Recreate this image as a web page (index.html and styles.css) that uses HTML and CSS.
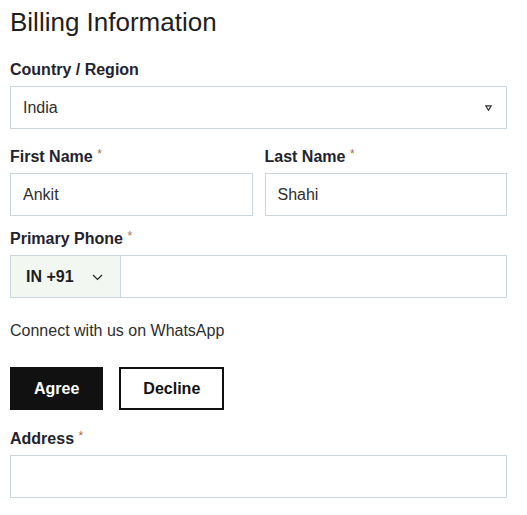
FILE: index.html
```html
<!DOCTYPE html>
<html lang="en">
<head>
<meta charset="utf-8">
<title>Billing Information</title>
<link rel="stylesheet" href="styles.css">
</head>
<body>
<form class="billing">
  <h1 class="title">Billing Information</h1>

  <div class="field field-country">
    <label class="label">Country / Region</label>
    <div class="select">
      <span class="select-value">India</span>
      <svg class="select-arrow" width="7" height="6" viewBox="0 0 7 6"><polygon points="0.8,0.8 6.2,0.8 3.5,5.2" fill="none" stroke="#333" stroke-width="1.2"/></svg>
    </div>
  </div>

  <div class="row-names">
    <div class="field">
      <label class="label">First Name <span class="req">*</span></label>
      <input class="input" type="text" value="Ankit">
    </div>
    <div class="field">
      <label class="label">Last Name <span class="req">*</span></label>
      <input class="input" type="text" value="Shahi">
    </div>
  </div>

  <div class="field field-phone">
    <label class="label">Primary Phone <span class="req">*</span></label>
    <div class="phone">
      <div class="phone-prefix">
        <span class="phone-code">IN +91</span>
        <svg class="chevron" width="11" height="7" viewBox="0 0 11 7"><polyline points="1,1 5.5,5.5 10,1" fill="none" stroke="#222" stroke-width="1.2"/></svg>
      </div>
      <input class="phone-input" type="text" value="">
    </div>
  </div>

  <p class="whatsapp">Connect with us on WhatsApp</p>

  <div class="buttons">
    <button type="button" class="btn btn-agree">Agree</button>
    <button type="button" class="btn btn-decline">Decline</button>
  </div>

  <div class="field field-address">
    <label class="label">Address <span class="req">*</span></label>
    <input class="input" type="text" value="">
  </div>
</form>
</body>
</html>
```

FILE: styles.css
```css
* {
  box-sizing: border-box;
}

body {
  margin: 0;
  padding: 7px 0 0 10px;
  background: #ffffff;
  font-family: "Liberation Sans", Arial, sans-serif;
  color: #222222;
}

.billing {
  width: 497px;
}

.title {
  margin: 0;
  font-size: 26px;
  line-height: 30px;
  font-weight: normal;
  color: #1e1e1e;
}

.field {
  display: flex;
  flex-direction: column;
}

.label {
  display: block;
  font-size: 16px;
  line-height: 20px;
  font-weight: bold;
  color: #23232f;
  margin-bottom: 6px;
}

.req {
  font-size: 12px;
  font-weight: normal;
  color: #a8703f;
  vertical-align: top;
  line-height: 15px;
}

.field-country {
  margin-top: 23px;
}

.select {
  height: 43px;
  border: 1px solid #cbd7de;
  display: flex;
  align-items: center;
  justify-content: space-between;
  padding: 0 14px 0 12px;
}

.select-value {
  font-size: 16px;
  color: #2e2e2e;
  margin-top: 1px;
}

.select-arrow {
  display: block;
}

.row-names {
  margin-top: 18px;
  display: grid;
  grid-template-columns: 1fr 1fr;
  gap: 12px;
}

.input {
  height: 43px;
  width: 100%;
  border: 1px solid #cbd7de;
  border-radius: 0;
  padding: 0 12px;
  font-family: "Liberation Sans", Arial, sans-serif;
  font-size: 16px;
  color: #2e2e2e;
  background: #ffffff;
  outline: none;
}

.field-phone {
  margin-top: 13px;
}

.phone {
  height: 43px;
  border: 1px solid #cbd7de;
  display: flex;
}

.phone-prefix {
  width: 110px;
  background: #f3f7f2;
  border-right: 1px solid #cbd7de;
  display: flex;
  align-items: center;
  padding-left: 15px;
  gap: 18px;
}

.phone-code {
  font-size: 16px;
  font-weight: bold;
  color: #1e1e1e;
}

.chevron {
  display: block;
  margin-top: 1px;
}

.phone-input {
  flex: 1;
  border: none;
  outline: none;
  background: #ffffff;
  font-family: "Liberation Sans", Arial, sans-serif;
  font-size: 16px;
}

.whatsapp {
  margin: 23px 0 0;
  font-size: 16px;
  line-height: 20px;
  color: #2e2e2e;
}

.buttons {
  margin-top: 26px;
  display: flex;
  gap: 16px;
}

.btn {
  height: 43px;
  padding: 0 22px;
  border: 2px solid #111111;
  font-family: "Liberation Sans", Arial, sans-serif;
  font-size: 16px;
  font-weight: bold;
  cursor: pointer;
}

.btn-agree {
  background: #111111;
  color: #ffffff;
}

.btn-decline {
  background: #ffffff;
  color: #111111;
}

.field-address {
  margin-top: 19px;
}
```
